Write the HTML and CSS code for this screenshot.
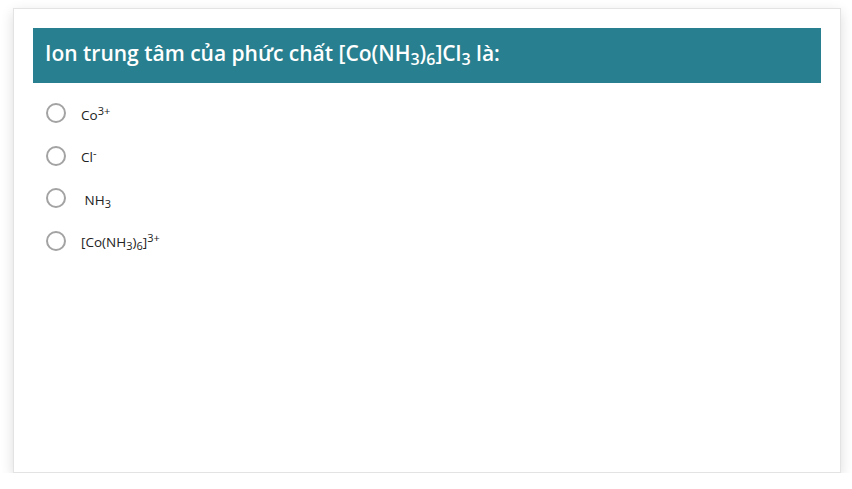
FILE: index.html
```html
<!DOCTYPE html>
<html lang="vi">
<head>
<meta charset="utf-8">
<link rel="stylesheet" href="styles.css">
</head>
<body>
<div class="card">
  <div class="question">Ion trung tâm của phức chất [Co(NH<sub>3</sub>)<sub>6</sub>]Cl<sub>3</sub> là:</div>
  <ul class="options">
    <li class="option"><span class="radio"></span><span class="label">Co<sup>3+</sup></span></li>
    <li class="option"><span class="radio"></span><span class="label">Cl<sup>-</sup></span></li>
    <li class="option"><span class="radio"></span><span class="label">&nbsp;NH<sub>3</sub></span></li>
    <li class="option"><span class="radio"></span><span class="label">[Co(NH<sub>3</sub>)<sub>6</sub>]<sup>3+</sup></span></li>
  </ul>
</div>
</body>
</html>
```
FILE: styles.css
```css
html, body {
  margin: 0;
  padding: 0;
  background: #ffffff;
}
body {
  font-family: "Open Sans", "Liberation Sans", sans-serif;
  padding: 8px 0 0 13px;
}
.card {
  box-sizing: border-box;
  width: 828px;
  height: 465px;
  background: #fff;
  border: 1px solid #e3e3e3;
  box-shadow: 0 4px 12px rgba(0,0,0,0.14);
  padding: 19px 19px 0 19px;
}
.question {
  background: #287f8f;
  color: #fff;
  font-size: 21px;
  font-weight: 600;
  height: 55px;
  box-sizing: border-box;
  padding: 11px 12px 0 12px;
  line-height: 29px;
}
.question sub {
  font-size: 16px;
  vertical-align: -4px;
  line-height: 0;
}
.options {
  list-style: none;
  margin: 0;
  padding: 20px 0 0 13px;
}
.option {
  display: flex;
  align-items: center;
  height: 20px;
  margin-bottom: 22.5px;
}
.radio {
  box-sizing: border-box;
  width: 20px;
  height: 20px;
  border: 2px solid #a3a3a3;
  border-radius: 50%;
  flex: none;
}
.label {
  margin-left: 15px;
  font-size: 13.5px;
  color: #222;
  line-height: 20px;
  padding-top: 3px;
}
.label sup {
  font-size: 11px;
  vertical-align: 5px;
  line-height: 0;
}
.label sub {
  font-size: 11px;
  vertical-align: -3px;
  line-height: 0;
}
```
